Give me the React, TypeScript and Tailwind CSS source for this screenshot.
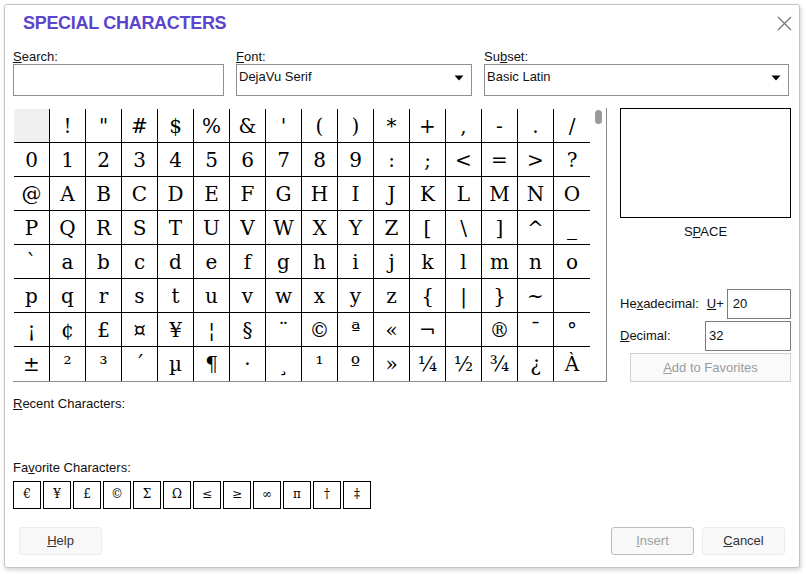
import React from "react";

const ROWS: string[][] = [
  [" ", "!", '"', "#", "$", "%", "&", "'", "(", ")", "*", "+", ",", "-", ".", "/"],
  "0123456789:;<=>?".split(""),
  "@ABCDEFGHIJKLMNO".split(""),
  "PQRSTUVWXYZ[\\]^_".split(""),
  "`abcdefghijklmno".split(""),
  [..."pqrstuvwxyz{|}~".split(""), ""],
  ["¡", "¢", "£", "¤", "¥", "¦", "§", "¨", "©", "ª", "«", "¬", "", "®", "¯", "°"],
  ["±", "²", "³", "´", "µ", "¶", "·", "¸", "¹", "º", "»", "¼", "½", "¾", "¿", "À"],
];

const FAVORITES = ["€", "¥", "£", "©", "Σ", "Ω", "≤", "≥", "∞", "π", "†", "‡"];

const ui = "font-['Liberation_Sans',Arial,sans-serif]";
const serif = "font-['DejaVu_Serif',serif]";

function Caret() {
  return (
    <svg width="10" height="6" viewBox="0 0 10 6" className="shrink-0">
      <path d="M0.5 0.5 L9.5 0.5 L5 5.5 Z" fill="#000" />
    </svg>
  );
}

function Select({ value, width }: { value: string; width: string }) {
  return (
    <div
      className={`${width} h-[32px] border border-[#8e8e8e] bg-white flex items-start justify-between pl-[2px] pr-[7px] pt-[4px]`}
    >
      <span className="leading-[16px] text-[13px] text-[#111]">{value}</span>
      <div className="pt-[6px]">
        <Caret />
      </div>
    </div>
  );
}

function CharGrid() {
  return (
    <div className="flex w-[594px] h-[274px] pl-[1px] pt-[1px] border-r border-b border-[#8a8a8a]">
      <div className={`grid grid-cols-[repeat(16,36px)] ${serif} text-[20px] text-black`}>
        {ROWS.map((row, r) =>
          row.map((ch, c) => (
            <div
              key={`${r}-${c}`}
              className={[
                "h-[34px] flex items-center justify-center leading-none",
                c < 15 ? "border-r border-black" : "",
                r < 7 ? "border-b border-black" : "",
                r === 0 && c === 0 ? "bg-[#f0f0f0]" : "",
              ].join(" ")}
            >
              {ch}
            </div>
          ))
        )}
      </div>
      <div className="w-[16px] flex justify-center pt-[1px]">
        <div className="w-[7px] h-[14px] rounded-full bg-[#9a9a9a]" />
      </div>
    </div>
  );
}

function SidePanel() {
  return (
    <div className="w-[171px] h-[274px] flex flex-col text-[13px] text-[#111]">
      <div className="h-[110px] border border-black bg-white" />
      <div className="mt-[6px] text-center leading-[16px]">
        S<u>P</u>ACE
      </div>
      <div className="mt-auto flex flex-col gap-[2px]">
        <div className="flex items-center h-[30px]">
          <span>
            He<u>x</u>adecimal:
          </span>
          <span className="ml-[8px] mr-[3px]">
            <u>U</u>+
          </span>
          <div className="flex-1 h-[30px] border border-[#7c7c7c] bg-white flex items-center px-[5px]">
            20
          </div>
        </div>
        <div className="flex items-center h-[30px]">
          <span className="w-[85px]">
            <u>D</u>ecimal:
          </span>
          <div className="flex-1 h-[30px] border border-[#7c7c7c] bg-white flex items-center px-[3px]">
            32
          </div>
        </div>
        <div className="ml-[10px] h-[29px] border border-[#cfcfcf] bg-[#fafafa] flex items-center justify-center text-[#9a9a9a]">
          <span>
            <u>A</u>dd to Favorites
          </span>
        </div>
      </div>
    </div>
  );
}

export default function App() {
  return (
    <div className={`w-[806px] h-[574px] bg-white pl-[4px] pt-[4px] ${ui}`}>
      <div className="w-[796px] h-[564px] border border-[#c4c4c4] rounded-[3px] bg-white shadow-[1px_2px_4px_rgba(0,0,0,0.18)] flex flex-col">
        <div className="h-[44px] flex items-start justify-between pl-[18px] pr-[7px] pt-[7px]">
          <h1 className="text-[18px] leading-[22px] font-bold tracking-[-0.3px] text-[#5b45cf]">
            SPECIAL CHARACTERS
          </h1>
          <svg width="15" height="15" viewBox="0 0 15 15" className="mt-[4px]">
            <path d="M1 1 L14 14 M14 1 L1 14" stroke="#7a7a7a" strokeWidth="1.4" />
          </svg>
        </div>

        <div className="pl-[8px] pr-[7px] text-[13px] text-[#111]">
          <div className="flex gap-[12px] mr-[3px]">
            <div className="flex flex-col">
              <span className="leading-[15px]">
                <u>S</u>earch:
              </span>
              <div className="w-[211px] h-[32px] border border-[#8e8e8e] bg-white" />
            </div>
            <div className="flex flex-col">
              <span className="leading-[15px]">
                <u>F</u>ont:
              </span>
              <Select value="DejaVu Serif" width="w-[236px]" />
            </div>
            <div className="flex flex-col flex-1">
              <span className="leading-[15px]">
                Su<u>b</u>set:
              </span>
              <Select value="Basic Latin" width="w-full" />
            </div>
          </div>

          <div className="flex gap-[13px] mt-[12px]">
            <CharGrid />
            <SidePanel />
          </div>

          <div className="mt-[14px] leading-[15px]">
            <u>R</u>ecent Characters:
          </div>
          <div className="h-[49px]" />
          <div className="leading-[15px]">
            Fa<u>v</u>orite Characters:
          </div>
          <div className="flex gap-[2px] mt-[6px]">
            {FAVORITES.map((ch) => (
              <div
                key={ch}
                className={`w-[28px] h-[28px] border border-black flex items-center justify-center ${serif} text-[12px] text-black pb-[2px]`}
              >
                {ch}
              </div>
            ))}
          </div>
        </div>

        <div className="flex items-center justify-between pl-[14px] pr-[14px] mt-[18px] text-[13px] text-[#333]">
          <button className="w-[83px] h-[28px] rounded-[3px] border border-[#ececec] bg-[#f8f8f8]">
            <u>H</u>elp
          </button>
          <div className="flex gap-[8px]">
            <button className="w-[83px] h-[28px] rounded-[3px] border border-[#bdbdbd] bg-[#f8f8f8] text-[#a0a0a0]">
              <u>I</u>nsert
            </button>
            <button className="w-[83px] h-[28px] rounded-[3px] border border-[#ececec] bg-[#f8f8f8]">
              <u>C</u>ancel
            </button>
          </div>
        </div>
      </div>
    </div>
  );
}
